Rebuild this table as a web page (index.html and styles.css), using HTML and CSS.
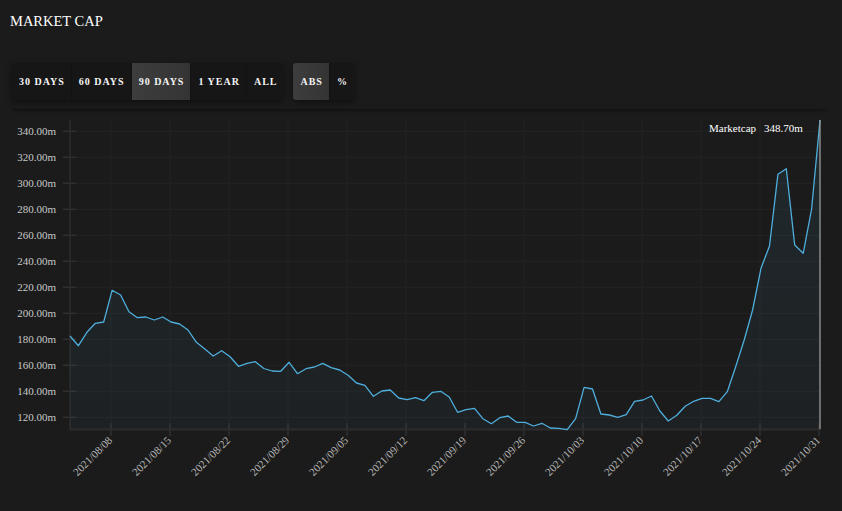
FILE: index.html
```html
<!DOCTYPE html>
<html>
<head>
<meta charset="utf-8">
<link rel="stylesheet" href="styles.css">
</head>
<body>
<h1 class="title">MARKET CAP</h1>
<div class="toolbar">
  <div class="btn-group">
    <button class="btn">30 DAYS</button>
    <button class="btn">60 DAYS</button>
    <button class="btn active">90 DAYS</button>
    <button class="btn">1 YEAR</button>
    <button class="btn">ALL</button>
  </div>
  <div class="btn-group">
    <button class="btn active">ABS</button>
    <button class="btn">%</button>
  </div>
</div>
<svg class="chart" width="842" height="401" viewBox="0 110 842 401" xmlns="http://www.w3.org/2000/svg">
  <defs>
    <linearGradient id="fill" x1="0" y1="0" x2="0" y2="1">
      <stop offset="0" stop-color="#50aad7" stop-opacity="0.10"/>
      <stop offset="1" stop-color="#50aad7" stop-opacity="0.04"/>
    </linearGradient>
  </defs>
  <g class="grid">
    <line x1="70" y1="131.3" x2="820" y2="131.3"/>
    <line x1="70" y1="157.3" x2="820" y2="157.3"/>
    <line x1="70" y1="183.3" x2="820" y2="183.3"/>
    <line x1="70" y1="209.3" x2="820" y2="209.3"/>
    <line x1="70" y1="235.3" x2="820" y2="235.3"/>
    <line x1="70" y1="261.3" x2="820" y2="261.3"/>
    <line x1="70" y1="287.3" x2="820" y2="287.3"/>
    <line x1="70" y1="313.3" x2="820" y2="313.3"/>
    <line x1="70" y1="339.3" x2="820" y2="339.3"/>
    <line x1="70" y1="365.3" x2="820" y2="365.3"/>
    <line x1="70" y1="391.3" x2="820" y2="391.3"/>
    <line x1="70" y1="417.3" x2="820" y2="417.3"/>
    <line x1="111" y1="120" x2="111" y2="429"/>
    <line x1="170" y1="120" x2="170" y2="429"/>
    <line x1="229" y1="120" x2="229" y2="429"/>
    <line x1="288" y1="120" x2="288" y2="429"/>
    <line x1="347" y1="120" x2="347" y2="429"/>
    <line x1="406" y1="120" x2="406" y2="429"/>
    <line x1="465" y1="120" x2="465" y2="429"/>
    <line x1="524" y1="120" x2="524" y2="429"/>
    <line x1="583" y1="120" x2="583" y2="429"/>
    <line x1="642" y1="120" x2="642" y2="429"/>
    <line x1="701" y1="120" x2="701" y2="429"/>
    <line x1="760" y1="120" x2="760" y2="429"/>
  </g>
  <g class="ticks">
    <line x1="63" y1="131.3" x2="76" y2="131.3"/>
    <line x1="63" y1="157.3" x2="76" y2="157.3"/>
    <line x1="63" y1="183.3" x2="76" y2="183.3"/>
    <line x1="63" y1="209.3" x2="76" y2="209.3"/>
    <line x1="63" y1="235.3" x2="76" y2="235.3"/>
    <line x1="63" y1="261.3" x2="76" y2="261.3"/>
    <line x1="63" y1="287.3" x2="76" y2="287.3"/>
    <line x1="63" y1="313.3" x2="76" y2="313.3"/>
    <line x1="63" y1="339.3" x2="76" y2="339.3"/>
    <line x1="63" y1="365.3" x2="76" y2="365.3"/>
    <line x1="63" y1="391.3" x2="76" y2="391.3"/>
    <line x1="63" y1="417.3" x2="76" y2="417.3"/>
    <line x1="111" y1="423" x2="111" y2="436"/>
    <line x1="170" y1="423" x2="170" y2="436"/>
    <line x1="229" y1="423" x2="229" y2="436"/>
    <line x1="288" y1="423" x2="288" y2="436"/>
    <line x1="347" y1="423" x2="347" y2="436"/>
    <line x1="406" y1="423" x2="406" y2="436"/>
    <line x1="465" y1="423" x2="465" y2="436"/>
    <line x1="524" y1="423" x2="524" y2="436"/>
    <line x1="583" y1="423" x2="583" y2="436"/>
    <line x1="642" y1="423" x2="642" y2="436"/>
    <line x1="701" y1="423" x2="701" y2="436"/>
    <line x1="760" y1="423" x2="760" y2="436"/>
    <line x1="819" y1="423" x2="819" y2="436"/>
  </g>
  <line class="axis" x1="70" y1="120" x2="70" y2="430"/>
  <line class="axis x-axis" x1="69" y1="429.5" x2="821" y2="429.5"/>
  <path class="area" d="M70,336 L78.4,345.7 L86.9,332.3 L95.3,323.3 L103.7,322 L112.1,290.3 L120.6,295 L129,311.7 L137.4,317.7 L145.8,317 L154.3,320 L162.7,317 L171.1,322 L179.6,324 L188,330 L196.4,342.3 L204.8,349 L213.3,356 L221.7,350.7 L230.1,356.7 L238.5,366.3 L247,363.3 L255.4,361.7 L263.8,368.5 L272.2,371 L280.7,371.3 L289.1,362.3 L297.5,373.7 L306,368.7 L314.4,367 L322.8,363.3 L331.2,367.7 L339.7,370 L348.1,375.3 L356.5,383 L364.9,385.3 L373.4,396.3 L381.8,391 L390.2,390 L398.7,398 L407.1,399.7 L415.5,397.7 L423.9,400.7 L432.4,392.3 L440.8,391.3 L449.2,397 L457.6,412.3 L466.1,409.7 L474.5,408.3 L482.9,418.7 L491.4,423.7 L499.8,417.7 L508.2,416 L516.6,422.3 L525.1,422.3 L533.5,426 L541.9,423.3 L550.3,428 L558.8,428.3 L567.2,429.7 L575.6,418.7 L584.1,387.3 L592.5,389 L600.9,414 L609.3,415 L617.8,417.3 L626.2,414.7 L634.6,401.3 L643,400 L651.5,396 L659.9,411 L668.3,421 L676.8,415.3 L685.2,406.3 L693.6,401.3 L702,398.3 L710.5,398.3 L718.9,401.7 L727.3,391.7 L735.7,366.7 L744.2,340 L752.6,310 L761,268.3 L769.5,246 L777.9,174.3 L786.3,168.7 L794.7,245 L803.2,253.3 L811.6,209 L820,120 L820,429 L70,429 Z"/>
  <path class="line" d="M70,336 L78.4,345.7 L86.9,332.3 L95.3,323.3 L103.7,322 L112.1,290.3 L120.6,295 L129,311.7 L137.4,317.7 L145.8,317 L154.3,320 L162.7,317 L171.1,322 L179.6,324 L188,330 L196.4,342.3 L204.8,349 L213.3,356 L221.7,350.7 L230.1,356.7 L238.5,366.3 L247,363.3 L255.4,361.7 L263.8,368.5 L272.2,371 L280.7,371.3 L289.1,362.3 L297.5,373.7 L306,368.7 L314.4,367 L322.8,363.3 L331.2,367.7 L339.7,370 L348.1,375.3 L356.5,383 L364.9,385.3 L373.4,396.3 L381.8,391 L390.2,390 L398.7,398 L407.1,399.7 L415.5,397.7 L423.9,400.7 L432.4,392.3 L440.8,391.3 L449.2,397 L457.6,412.3 L466.1,409.7 L474.5,408.3 L482.9,418.7 L491.4,423.7 L499.8,417.7 L508.2,416 L516.6,422.3 L525.1,422.3 L533.5,426 L541.9,423.3 L550.3,428 L558.8,428.3 L567.2,429.7 L575.6,418.7 L584.1,387.3 L592.5,389 L600.9,414 L609.3,415 L617.8,417.3 L626.2,414.7 L634.6,401.3 L643,400 L651.5,396 L659.9,411 L668.3,421 L676.8,415.3 L685.2,406.3 L693.6,401.3 L702,398.3 L710.5,398.3 L718.9,401.7 L727.3,391.7 L735.7,366.7 L744.2,340 L752.6,310 L761,268.3 L769.5,246 L777.9,174.3 L786.3,168.7 L794.7,245 L803.2,253.3 L811.6,209 L820,120"/>
  <line class="cursor" x1="820" y1="120" x2="820" y2="429"/>
  <g class="ylabels">
    <text x="56" y="135.3">340.00m</text>
    <text x="56" y="161.3">320.00m</text>
    <text x="56" y="187.3">300.00m</text>
    <text x="56" y="213.3">280.00m</text>
    <text x="56" y="239.3">260.00m</text>
    <text x="56" y="265.3">240.00m</text>
    <text x="56" y="291.3">220.00m</text>
    <text x="56" y="317.3">200.00m</text>
    <text x="56" y="343.3">180.00m</text>
    <text x="56" y="369.3">160.00m</text>
    <text x="56" y="395.3">140.00m</text>
    <text x="56" y="421.3">120.00m</text>
  </g>
  <g class="xlabels">
    <text transform="translate(113 441) rotate(-45)">2021/08/08</text>
    <text transform="translate(172 441) rotate(-45)">2021/08/15</text>
    <text transform="translate(231 441) rotate(-45)">2021/08/22</text>
    <text transform="translate(290 441) rotate(-45)">2021/08/29</text>
    <text transform="translate(349 441) rotate(-45)">2021/09/05</text>
    <text transform="translate(408 441) rotate(-45)">2021/09/12</text>
    <text transform="translate(467 441) rotate(-45)">2021/09/19</text>
    <text transform="translate(526 441) rotate(-45)">2021/09/26</text>
    <text transform="translate(585 441) rotate(-45)">2021/10/03</text>
    <text transform="translate(644 441) rotate(-45)">2021/10/10</text>
    <text transform="translate(703 441) rotate(-45)">2021/10/17</text>
    <text transform="translate(762 441) rotate(-45)">2021/10/24</text>
    <text transform="translate(821 441) rotate(-45)">2021/10/31</text>
  </g>
  <g class="legend">
    <text x="709" y="132">Marketcap</text>
    <text x="764" y="132">348.70m</text>
  </g>
</svg>
</body>
</html>
```
FILE: styles.css
```css
html, body {
  margin: 0;
  padding: 0;
  background: #1b1b1b;
  font-family: "Liberation Serif", "Times New Roman", serif;
  color: #fff;
}

.title {
  margin: 0;
  padding: 13px 10px 0;
  height: 29px;
  font-size: 14.5px;
  font-weight: normal;
  line-height: 16px;
  color: #fff;
}

.toolbar {
  margin: 0 15px 0 12px;
  height: 46px;
  padding-top: 21px;
  display: flex;
  gap: 10px;
  align-items: flex-start;
  border-bottom: 1px solid #121212;
  border-radius: 0 0 4px 4px;
  box-shadow: 0 3px 3px -2px rgba(0, 0, 0, 0.35);
}

.btn-group {
  display: flex;
  background: #161616;
  border-radius: 3px;
  box-shadow: 0 2px 6px rgba(0, 0, 0, 0.45);
  overflow: hidden;
  height: 37px;
}

.btn {
  background: transparent;
  border: 0;
  border-right: 1px solid #121212;
  color: #f4f4f4;
  font-family: "Liberation Serif", "Times New Roman", serif;
  font-weight: bold;
  font-size: 10px;
  letter-spacing: 1px;
  padding: 0 6px 0 7px;
  height: 37px;
  cursor: pointer;
}

.btn:last-child {
  border-right: 0;
}

.btn.active {
  background: linear-gradient(to right, #3d3d3d, #343434);
}

.chart {
  display: block;
}

.grid line {
  stroke: #232323;
  stroke-width: 1;
}

.ticks line {
  stroke: #303030;
  stroke-width: 1.5;
}

.axis {
  stroke: #2c2c2c;
  stroke-width: 1.5;
}

.x-axis {
  stroke-width: 2;
}

.area {
  fill: url(#fill);
  stroke: none;
}

.line {
  fill: none;
  stroke: #4eaedc;
  stroke-width: 1.3;
  stroke-linejoin: round;
}

.cursor {
  stroke: #9a9a9a;
  stroke-width: 1.3;
}

.ylabels text {
  font-family: "Liberation Serif", "Times New Roman", serif;
  font-size: 11px;
  fill: #c8c8c8;
  text-anchor: end;
}

.xlabels text {
  font-family: "Liberation Serif", "Times New Roman", serif;
  font-size: 11px;
  fill: #b8b8b8;
  text-anchor: end;
}

.legend text {
  font-family: "Liberation Serif", "Times New Roman", serif;
  font-size: 11px;
  fill: #ffffff;
}
```
